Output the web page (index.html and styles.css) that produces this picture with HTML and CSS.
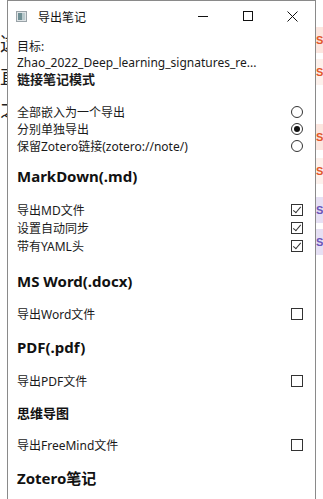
FILE: index.html
```html
<!DOCTYPE html>
<html lang="zh-CN">
<head>
    <meta charset="UTF-8">
    <meta name="viewport" content="width=device-width, initial-scale=1.0">
    <title>导出笔记</title>
    <link rel="stylesheet" href="styles.css">
</head>
<body>
    <div class="desktop">
        <div class="doc-left">
            <p class="doc-line">这</p>
            <p class="doc-line">直</p>
            <p class="doc-line">之</p>
        </div>
        <div class="doc-right">
            <span class="tag red t1">S</span>
            <span class="tag red t2">S</span>
            <span class="tag red t3">S</span>
            <span class="tag red t4">S</span>
            <span class="tag purple t5">S</span>
            <span class="tag purple t6">S</span>
        </div>
    </div>

    <div class="window">
        <div class="title-bar">
            <svg class="app-icon" width="11" height="11" viewBox="0 0 11 11">
                <rect x="0.5" y="0.5" width="10" height="10" fill="#dfe4e6" stroke="#9aa3a8"/>
                <rect x="2" y="2" width="4" height="7" fill="#6f8f94"/>
                <rect x="6" y="2" width="3" height="7" fill="#b9c9cc"/>
            </svg>
            <span class="title">导出笔记</span>
            <div class="caption-buttons">
                <span class="cap-btn">
                    <svg width="10" height="10" viewBox="0 0 10 10"><line x1="0" y1="5.5" x2="10" y2="5.5" stroke="#111" stroke-width="1"/></svg>
                </span>
                <span class="cap-btn">
                    <svg width="10" height="10" viewBox="0 0 10 10"><rect x="0.5" y="0.5" width="9" height="9" fill="none" stroke="#111" stroke-width="1"/></svg>
                </span>
                <span class="cap-btn">
                    <svg width="11" height="11" viewBox="0 0 11 11"><path d="M0.5 0.5 L10.5 10.5 M10.5 0.5 L0.5 10.5" stroke="#111" stroke-width="1"/></svg>
                </span>
            </div>
        </div>

        <div class="content">
            <div class="target-label">目标:</div>
            <div class="target-name">Zhao_2022_Deep_learning_signatures_re...</div>
            <div class="sub-heading">链接笔记模式</div>

            <div class="group radios">
                <label class="row">
                    <span>全部嵌入为一个导出</span>
                    <span class="radio"></span>
                </label>
                <label class="row">
                    <span>分别单独导出</span>
                    <span class="radio checked"></span>
                </label>
                <label class="row">
                    <span>保留Zotero链接(zotero://note/)</span>
                    <span class="radio"></span>
                </label>
            </div>

            <div class="heading first">MarkDown(.md)</div>
            <div class="group">
                <label class="row tall">
                    <span>导出MD文件</span>
                    <span class="check checked"></span>
                </label>
                <label class="row tall">
                    <span>设置自动同步</span>
                    <span class="check checked"></span>
                </label>
                <label class="row tall">
                    <span>带有YAML头</span>
                    <span class="check checked"></span>
                </label>
            </div>

            <div class="heading wide">MS Word(.docx)</div>
            <div class="group tight">
                <label class="row tall">
                    <span>导出Word文件</span>
                    <span class="check"></span>
                </label>
            </div>

            <div class="heading">PDF(.pdf)</div>
            <div class="group">
                <label class="row tall">
                    <span>导出PDF文件</span>
                    <span class="check"></span>
                </label>
            </div>

            <div class="heading small">思维导图</div>
            <div class="group tight">
                <label class="row tall">
                    <span>导出FreeMind文件</span>
                    <span class="check"></span>
                </label>
            </div>

            <div class="heading">Zotero笔记</div>
        </div>
    </div>
</body>
</html>
```

FILE: styles.css
```css
* {
    margin: 0;
    padding: 0;
    box-sizing: border-box;
}

html, body {
    width: 323px;
    height: 499px;
    overflow: hidden;
}

body {
    position: relative;
    background: #fff;
    font-family: "Segoe UI", "Noto Sans", "Noto Sans CJK SC", sans-serif;
    color: #1a1a1a;
}

/* document visible behind the dialog */
.desktop {
    width: 100%;
    height: 100%;
}

.doc-left {
    padding-top: 26px;
}

.doc-line {
    font-family: "Noto Sans CJK SC", sans-serif;
    font-size: 19px;
    line-height: 33px;
    color: #222;
}

.doc-right {
    position: absolute;
    top: 0;
    right: 0;
    width: 7px;
    height: 100%;
}

.tag {
    position: absolute;
    left: 0;
    width: 7px;
    height: 26px;
    font-family: "Liberation Sans", sans-serif;
    font-size: 11px;
    font-weight: bold;
    line-height: 26px;
}

.red { color: #e2572c; background: #fce6df; }
.purple { color: #6b54b8; background: #e6e0f4; }

.t1 { top: 27px; }
.t2 { top: 59px; background: #fdf1ec; }
.t3 { top: 124px; }
.t4 { top: 158px; background: #fdf1ec; }
.t5 { top: 197px; }
.t6 { top: 229px; }

/* dialog */
.window {
    position: absolute;
    left: 7px;
    top: 0;
    width: 309px;
    height: 510px;
    background: #fff;
    border: 1px solid #8a8a8a;
}

.title-bar {
    height: 30px;
    display: flex;
    align-items: center;
    padding-left: 8px;
}

.app-icon {
    display: block;
}

.title {
    margin-left: 11px;
    font-family: "Noto Sans CJK SC", sans-serif;
    font-size: 12px;
    color: #111;
}

.caption-buttons {
    margin-left: auto;
    display: flex;
    height: 100%;
}

.cap-btn {
    width: 45px;
    display: flex;
    align-items: center;
    justify-content: center;
}

.cap-btn svg {
    display: block;
}

.content {
    padding: 8px 12px 0 9px;
    font-size: 12px;
}

.target-label,
.target-name {
    line-height: 16px;
}

.sub-heading {
    font-weight: bold;
    font-size: 13px;
    line-height: 17px;
}

.group {
    margin-top: 14px;
}

.group.tight {
    margin-top: 13px;
}

.radios {
    margin-top: 15px;
}

.row {
    display: flex;
    align-items: center;
    justify-content: space-between;
    height: 17px;
}

.row.tall {
    height: 18px;
}

.heading {
    margin-top: 13px;
    font-size: 15px;
    font-weight: bold;
    line-height: 22px;
    color: #111;
}

.heading.first {
    margin-top: 11px;
}

.heading.wide {
    margin-top: 15px;
}

.heading.small {
    font-size: 13px;
    line-height: 20px;
}

.radio {
    width: 12px;
    height: 12px;
    border: 1px solid #333;
    border-radius: 50%;
    display: flex;
    align-items: center;
    justify-content: center;
}

.radio.checked::after {
    content: "";
    width: 6px;
    height: 6px;
    border-radius: 50%;
    background: #111;
}

.check {
    width: 12px;
    height: 12px;
    border: 1px solid #333;
    position: relative;
}

.check.checked::after {
    content: "";
    position: absolute;
    left: 3px;
    top: 0;
    width: 3px;
    height: 7px;
    border-right: 1px solid #333;
    border-bottom: 1px solid #333;
    transform: rotate(40deg);
}
```
